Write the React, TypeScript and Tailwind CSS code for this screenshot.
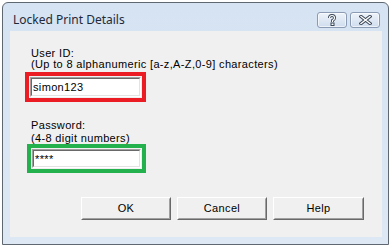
import React from 'react';

const font = { fontFamily: '"Liberation Sans", Arial, sans-serif' };

const Sunken = ({ children, h }: { children?: React.ReactNode; h: string }) => (
  <div className="border border-t-[#a0a0a0] border-l-[#a0a0a0] border-b-white border-r-white">
    <div
      className={`${h} border border-t-[#696969] border-l-[#696969] border-b-[#e3e3e3] border-r-[#e3e3e3] bg-white pl-[1px] text-[11px] leading-[16px] text-black`}
    >
      {children}
    </div>
  </div>
);

const Button = ({ label, className = '' }: { label: string; className?: string }) => (
  <div className={`h-[23px] border border-t-white border-l-white border-b-[#696969] border-r-[#696969] ${className}`}>
    <div className="flex h-full items-center justify-center border border-t-[#f0f0f0] border-l-[#f0f0f0] border-b-[#a0a0a0] border-r-[#a0a0a0] bg-[#f0f0f0] text-[11px] tracking-[0.35px] text-black">
      {label}
    </div>
  </div>
);

const CaptionButton = ({ children }: { children: React.ReactNode }) => (
  <div className="flex h-[16px] w-[30px] items-center justify-center rounded-[3px] border border-[#8a9bb3] bg-gradient-to-b from-[#eef3fa] to-[#d0ddee] shadow-[inset_0_0_0_1px_rgba(255,255,255,0.6)]">
    {children}
  </div>
);

export default function App() {
  return (
    <div className="h-[246px] w-[391px] bg-white pl-[2px] pt-[2px]" style={font}>
      <div className="flex h-[243px] w-[387px] flex-col rounded-t-[6px] border border-[#5f6770] bg-gradient-to-b from-[#d6e3f2] to-[#dde8f4]">
        {/* title bar */}
        <div className="flex h-[28px] items-start pl-[10px] pr-[8px]">
          <span
            className="flex-1 pt-[9px] text-[12px] leading-[16px] text-[#1e2a3a]"
            style={{ fontFamily: '"Noto Sans", "Open Sans", sans-serif' }}
          >
            Locked Print Details
          </span>
          <div className="flex gap-[3px] pt-[9px]">
            <CaptionButton>
              <svg width="10" height="12" viewBox="0 0 10 12">
                <path
                  d="M2.5 4 Q2.5 1.5 5 1.5 Q7.5 1.5 7.5 4 Q7.5 5.5 5.5 6.5 L5.5 8"
                  fill="none"
                  stroke="#3b4656"
                  strokeWidth="3"
                />
                <path
                  d="M2.5 4 Q2.5 1.5 5 1.5 Q7.5 1.5 7.5 4 Q7.5 5.5 5.5 6.5 L5.5 8"
                  fill="none"
                  stroke="#ffffff"
                  strokeWidth="1.2"
                />
                <rect x="4" y="9" width="3" height="2.5" fill="#ffffff" stroke="#3b4656" strokeWidth="1" />
              </svg>
            </CaptionButton>
            <CaptionButton>
              <svg width="13" height="10" viewBox="0 0 13 10">
                <path d="M2 1.5 L11 8.5 M11 1.5 L2 8.5" stroke="#3b4656" strokeWidth="3.4" strokeLinecap="square" />
                <path d="M2 1.5 L11 8.5 M11 1.5 L2 8.5" stroke="#ffffff" strokeWidth="1.4" strokeLinecap="square" />
              </svg>
            </CaptionButton>
          </div>
        </div>

        {/* client area */}
        <div className="ml-[7px] mr-[6px] h-[206px] bg-[#f0f0f0] text-[11px] tracking-[0.35px] text-black">
          <div className="pl-[15px] pt-[17px]">
            <div className="pl-[6px] leading-[10px]">User ID:</div>
            <div className="pl-[6px] leading-[13px]">(Up to 8 alphanumeric [a-z,A-Z,0-9] characters)</div>
            <div className="mt-[1px] w-[121px] border-4 border-[#ec1c24] p-[1px]">
              <Sunken h="h-[18px]">simon123</Sunken>
            </div>

            <div className="pl-[6px] pt-[17px] leading-[13px]">Password:</div>
            <div className="pl-[6px] leading-[12px]">(4-8 digit numbers)</div>
            <div className="ml-[2px] w-[119px] border-4 border-[#22b14c] p-[1px]">
              <Sunken h="h-[17px]">****</Sunken>
            </div>
          </div>

          <div className="mt-[24px] flex gap-[6px] pl-[71px]">
            <Button label="OK" className="w-[90px]" />
            <Button label="Cancel" className="w-[90px]" />
            <Button label="Help" className="w-[91px]" />
          </div>
        </div>
      </div>
    </div>
  );
}
